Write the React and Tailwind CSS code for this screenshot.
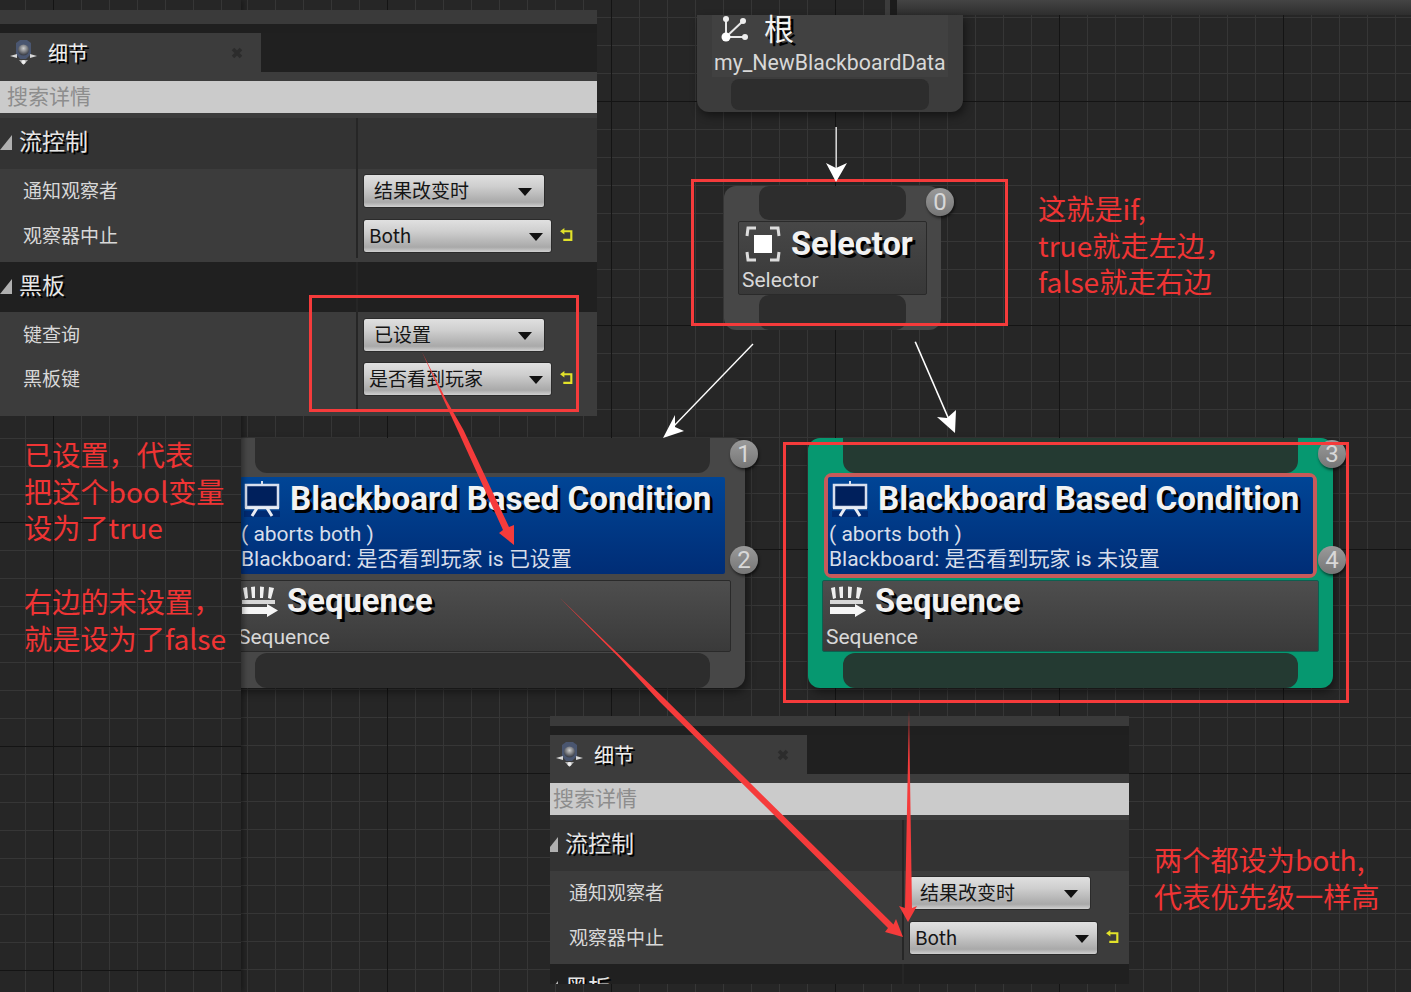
const cjk = "font-['Noto_Sans_CJK_SC','Noto_Sans',sans-serif]";
const rob = "font-['Roboto','Noto_Sans_CJK_SC',sans-serif]";

function DetailsIcon() {
  return (
    <svg width="30" height="30" viewBox="0 0 30 30" className="shrink-0">
      <defs>
        <radialGradient id="sph" cx="0.5" cy="0.35" r="0.6">
          <stop offset="0" stopColor="#cfcfcf" />
          <stop offset="1" stopColor="#3d4048" />
        </radialGradient>
      </defs>
      <path d="M8 5 L12 2 H19 L23 5 V16 L18 21 H12 L8 16 Z" fill="#4a5670" />
      <circle cx="15.5" cy="12" r="5.5" fill="url(#sph)" />
      <path d="M2 18 L9 16 L9 20 Z M29 18 L22 16 L22 20 Z" fill="#d8d8d8" />
      <path d="M11 22 H20 L15.500 27 Z" fill="#b0b0b0" />
      <circle cx="15.500" cy="24" r="2" fill="#f0f0f0" />
    </svg>
  );
}

function Dropdown({ label, wide }) {
  return (
    <div className="flex items-center">
      <div
        className={`flex h-[34px] items-center justify-between rounded-[3px] border border-[#2b2b2b] bg-[linear-gradient(to_bottom,#e0e0e0_0%,#cfcfcf_35%,#a9a9a9_85%,#d0d0d0_100%)] pb-[3px] ${cjk} text-[19px] leading-none text-[#151515] ${wide ? "w-[189px] pl-[5px] pr-[8px]" : "w-[182px] pl-[10px] pr-[12px]"}`}
      >
        <span>{label}</span>
        <svg width="14" height="8" viewBox="0 0 14 8" className="mt-[4px]"><path d="M0 0 H14 L7 8 Z" fill="#111" /></svg>
      </div>
      {wide && (
        <svg width="15" height="15" viewBox="0 0 14 14" className="mb-[3px] ml-[7px]">
          <path d="M5 1 L1 4 L5 7 Z" fill="#e2e22a" />
          <path d="M4 4 H11.500 V12 H4" fill="none" stroke="#e2e22a" strokeWidth="2" />
        </svg>
      )}
    </div>
  );
}

function Section({ title, dark, headH, pt, gap, pb, rows }) {
  return (
    <div>
      <div className={`flex ${headH} ${dark ? "bg-[#202020]" : "bg-[#333333]"}`}>
        <div className="flex w-[356px] items-center pb-[6px]">
          <svg width="13" height="15" viewBox="0 0 13 15" className="mt-[4px] shrink-0"><path d="M12 0 V15 H0 Z" fill="#b0b0b0" /></svg>
          <span className={`ml-[6px] ${cjk} text-[23px] text-[#e6e6e6] [text-shadow:2px_2px_0_#000]`}>{title}</span>
        </div>
        <div className="w-[2px] bg-[#262626]" />
      </div>
      {rows && (
        <div className="flex bg-[#3c3c3c]">
          <div className={`flex w-[356px] flex-col pl-[23px] ${pt} ${gap}`}>
            {rows.map((r) => (
              <div key={r.k} className={`flex h-[34px] items-center pb-[1px] ${cjk} text-[19px] text-[#d8d8d8]`}>{r.k}</div>
            ))}
          </div>
          <div className={`mb-[4px] flex flex-col border-l-2 border-[#262626] pl-[5px] ${pt} ${gap} ${pb}`}>
            {rows.map((r) => (
              <Dropdown key={r.k} label={r.v} wide={r.wide} />
            ))}
          </div>
        </div>
      )}
    </div>
  );
}

function DetailsPanel({ className, bandH, innerW, shift, second }) {
  return (
    <div className={`absolute overflow-hidden ${className}`}>
      <div className={`flex flex-col ${shift} ${innerW}`}>
        <div className={`${bandH} bg-[#3a3a3a]`} />
        <div className="h-[9px] bg-[#1f1f1f]" />
        <div className="flex h-[39px] bg-[#202020]">
          <div className="flex w-[261px] items-center bg-[#3c3c3c] pl-[8px]">
            <DetailsIcon />
            <span className={`ml-[10px] ${cjk} text-[20px] text-[#f0f0f0] [text-shadow:2px_2px_0_#000]`}>细节</span>
            <svg width="12" height="12" viewBox="0 0 12 12" className="ml-[143px]">
              <path d="M2 2 L10 10 M10 2 L2 10" stroke="#2c2c2c" strokeWidth="3.500" />
            </svg>
          </div>
        </div>
        <div className="h-[9px] bg-[#3c3c3c]" />
        <div className={`flex h-[32px] items-center bg-[#cbcbcb] pb-[2px] pl-[7px] ${cjk} text-[21px] text-[#8d8d8d]`}>搜索详情</div>
        <div className="h-[5px] bg-[#3c3c3c]" />
        <Section
          title="流控制"
          headH="h-[51px]"
          pt="pt-[5px]"
          gap="gap-[11px]"
          pb="pb-[5px]"
          rows={[
            { k: "通知观察者", v: "结果改变时" },
            { k: "观察器中止", v: "Both", wide: true },
          ]}
        />
        <Section
          title="黑板"
          dark
          headH="h-[50px]"
          pt="pt-[6px]"
          gap="gap-[10px]"
          pb="pb-[16px]"
          rows={
            second
              ? [
                  { k: "键查询", v: "已设置" },
                  { k: "黑板键", v: "是否看到玩家", wide: true },
                ]
              : null
          }
        />
      </div>
    </div>
  );
}

function Badge({ n, className }) {
  return (
    <div
      className={`absolute flex h-[28px] w-[28px] items-center justify-center rounded-full bg-[linear-gradient(to_bottom,#9a9a9a,#767676)] shadow-[1px_2px_3px_rgba(0,0,0,0.6)] ${rob} text-[24px] leading-none text-[#d8d8d8] ${className}`}
    >
      {n}
    </div>
  );
}

function BoardIcon() {
  return (
    <svg width="36" height="36" viewBox="0 0 36 36" className="shrink-0">
      <rect x="0" y="30" width="36" height="6" fill="#00246a" opacity="0.7" />
      <path d="M17 0 H19 V4 H17 Z" fill="#d8dfee" />
      <rect x="2" y="4" width="32" height="22" fill="#00205c" stroke="#d8dfee" strokeWidth="2.500" />
      <path d="M13 27 L8 35 M23 27 L28 35" stroke="#e8ecf4" strokeWidth="3" />
      <path d="M1 27 H35" stroke="#e8ecf4" strokeWidth="2.500" />
    </svg>
  );
}

function SeqIcon() {
  return (
    <svg width="36" height="32" viewBox="0 0 36 32" className="shrink-0">
      <path d="M1 2 L5 1 L6 12 L3 13 Z M9 1 L13 0.500 L13 12 L10 12 Z M18 0.500 L22 1 L21 12 L18 12 Z M27 1 L32 2 L29 13 L26 12 Z" fill="#efefef" />
      <path d="M0 14 H33 V18 H0 Z" fill="#d8d8d8" />
      <path d="M0 21 H25 V18 L36 24.500 L25 31 V28 H0 Z" fill="#f6f6f6" />
    </svg>
  );
}

function SelectorIcon() {
  return (
    <svg width="36" height="36" viewBox="0 0 36 36" className="shrink-0">
      <rect x="9" y="9" width="18" height="18" fill="#ffffff" />
      <path d="M2 10 L3 2 H11 M25 2 H33 L34 10 M2 26 L3 34 H11 M25 34 H33 L34 26" fill="none" stroke="#dcdcdc" strokeWidth="3" />
    </svg>
  );
}

function RootIcon() {
  return (
    <svg width="28" height="28" viewBox="0 0 28 28" className="shrink-0">
      <path d="M5 3 V21 H24 M5 21 L22 5" fill="none" stroke="#e8e8e8" strokeWidth="2" />
      <circle cx="5" cy="21" r="4.500" fill="#fff" />
      <circle cx="24" cy="21" r="3" fill="#eee" />
      <circle cx="22" cy="5" r="3" fill="#eee" />
      <circle cx="5" cy="3" r="3" fill="#eee" />
    </svg>
  );
}

const titleBase = `${rob} font-bold leading-none text-[#f2f2f2] [text-shadow:3px_3px_0_#000] whitespace-nowrap`;
const subCls = `${rob} font-normal text-[21px] leading-[25px] whitespace-nowrap`;

function ConditionNode({ className, selected, state }) {
  return (
    <div className={`absolute flex h-[250px] w-[525px] flex-col rounded-[12px] shadow-[2px_4px_8px_rgba(0,0,0,0.45)] ${selected ? "bg-[#069870]" : "bg-[#474747]"} ${className}`}>
      <div className={`ml-[35px] h-[35px] w-[455px] rounded-b-[12px] ${selected ? "bg-[#243a32]" : "bg-[#2d2d2d]"}`} />
      <div className={`ml-[16px] h-[105px] w-[493px] rounded-[8px] border-[4px] ${selected ? "border-[#c85a5a]" : "border-transparent"}`}>
        <div className="h-full rounded-[2px] bg-[linear-gradient(to_bottom,#004596,#002d76)] px-[1px]">
          <div className="flex h-[45px] items-center pb-[2px] pl-[3px]">
            <BoardIcon />
            <span className={`ml-[10px] text-[33.200px] ${titleBase}`}>Blackboard Based Condition</span>
          </div>
          <div className={`${subCls} text-[#d8deea]`}>( aborts both )</div>
          <div className={`${subCls} text-[#d8deea]`}>Blackboard: 是否看到玩家 is {state}</div>
        </div>
      </div>
      <div className={`ml-[14px] mt-[2px] h-[72px] w-[497px] rounded-[2px] border ${selected ? "border-[#0c6050]" : "border-[#2a2a2a]"} bg-[linear-gradient(to_bottom,#4e4e4e,#3a3a3a)]`}>
        <div className="flex h-[44px] items-center pb-[3px] pl-[7px]">
          <SeqIcon />
          <span className={`ml-[9px] text-[32.800px] ${titleBase}`}>Sequence</span>
        </div>
        <div className={`pl-[3px] ${subCls} text-[#d8d8d8]`}>Sequence</div>
      </div>
      <div className={`ml-[35px] mt-[1px] h-[35px] w-[455px] rounded-[12px] ${selected ? "bg-[#243a32]" : "bg-[#2d2d2d]"}`} />
    </div>
  );
}

function SelectorNode() {
  return (
    <div className="absolute left-[724px] top-[186px] flex h-[144px] w-[217px] flex-col items-center rounded-[12px] bg-[#474747]">
      <div className="h-[34px] w-[147px] rounded-[10px] bg-[#2d2d2d]" />
      <div className="mt-[1px] flex h-[74px] w-[189px] flex-col rounded-[2px] border border-[#2a2a2a] bg-[linear-gradient(to_bottom,#474747,#383838)]">
        <div className="flex h-[46px] items-center pb-[2px] pl-[6px]">
          <SelectorIcon />
          <span className={`ml-[10px] text-[32.600px] ${titleBase}`}>Selector</span>
        </div>
        <div className={`pl-[3px] ${subCls} text-[#d8d8d8]`}>Selector</div>
      </div>
      <div className="h-[35px] w-[147px] rounded-[10px] bg-[#2d2d2d]" />
    </div>
  );
}

function RootNode() {
  return (
    <div className="absolute left-[697px] top-[15px] flex h-[97px] w-[266px] flex-col items-center rounded-b-[12px] bg-[#3c3c3c] shadow-[2px_4px_8px_rgba(0,0,0,0.45)]">
      <div className="h-[62px] w-[236px] bg-[#414141]">
        <div className="flex h-[30px] items-center pl-[9px]">
          <RootIcon />
          <span className={`ml-[15px] ${cjk} pb-[6px] text-[30px] leading-none text-[#f2f2f2] [text-shadow:3px_3px_0_#000]`}>根</span>
        </div>
        <div className={`mt-[5px] pl-[2px] ${rob} text-[21.300px] leading-[25px] whitespace-nowrap text-[#d8d8d8]`}>my_NewBlackboardData</div>
      </div>
      <div className="mt-[2px] h-[31px] w-[198px] rounded-[8px] bg-[#2d2d2d]" />
    </div>
  );
}

function Note({ className, lines }) {
  return (
    <div className={`absolute ${cjk} text-[28.200px] leading-[36.500px] whitespace-nowrap text-[#ef3434] ${className}`}>
      {lines.map((l) => (
        <div key={l}>{l}</div>
      ))}
    </div>
  );
}

export default function App() {
  const grid =
    "[background-image:linear-gradient(to_right,#141414_1px,transparent_1px),linear-gradient(to_bottom,#141414_1px,transparent_1px),linear-gradient(to_right,#363636_1px,transparent_1px),linear-gradient(to_bottom,#363636_1px,transparent_1px)] [background-size:224px_224px,224px_224px,28px_28px,28px_28px]";
  return (
    <div className={`relative h-[992px] w-[1411px] overflow-hidden bg-[#262626] ${grid} [background-position:163px_101px,163px_101px,23px_17px,23px_17px]`}>
      {/* top window strip */}
      <div className="flex h-[15px] w-full bg-transparent">
        <div className="ml-[885px] w-[5px] bg-[#3c3c3c]" />
        <div className="w-[7px] bg-[#1c1c1c]" />
        <div className="flex-1 bg-[linear-gradient(to_bottom,#444444,#2e2e2e)]" />
      </div>

      <RootNode />
      <SelectorNode />
      <Badge n="0" className="left-[926px] top-[188px]" />

      <ConditionNode className="left-[220px] top-[438px]" state="已设置" />
      <Badge n="1" className="left-[730px] top-[440px]" />
      <Badge n="2" className="left-[730px] top-[546px]" />

      <ConditionNode className="left-[808px] top-[438px]" selected state="未设置" />
      <Badge n="3" className="left-[1318px] top-[440px]" />
      <Badge n="4" className="left-[1318px] top-[546px]" />

      {/* left canvas window */}
      <div className={`absolute left-0 top-0 h-[992px] w-[241px] bg-[#262626] shadow-[2px_0_6px_rgba(0,0,0,0.4)] ${grid} [background-position:53px_74px,53px_74px,25px_18px,25px_18px]`} />

      <DetailsPanel className="left-0 top-[10px] h-[406px] w-[597px]" bandH="h-[14px]" innerW="w-[597px]" shift="ml-0" second />
      <DetailsPanel className="left-[550px] top-[716px] h-[268px] w-[579px]" bandH="h-[10px]" innerW="w-[583px]" shift="ml-[-4px]" />

      <Note className="left-[1038px] top-[190px]" lines={["这就是if,", "true就走左边\uFF0C", "false就走右边"]} />
      <Note className="left-[24px] top-[436px]" lines={["已设置\uFF0C代表", "把这个bool变量", "设为了true"]} />
      <Note className="left-[24px] top-[583px]" lines={["右边的未设置\uFF0C", "就是设为了false"]} />
      <Note className="left-[1154px] top-[841px]" lines={["两个都设为both,", "代表优先级一样高"]} />

      {/* annotation layer: rectangles and arrows drawn on the picture */}
      <svg width="1411" height="992" viewBox="0 0 1411 992" className="pointer-events-none absolute left-0 top-0">
        <g fill="none" stroke="#f53b3b" strokeWidth="3">
          <rect x="310.500" y="296.500" width="267" height="114" />
          <rect x="692.500" y="180.500" width="314" height="144" />
          <rect x="784.500" y="443.500" width="563" height="258" />
        </g>
        <g fill="#ffffff">
          <path d="M835.500 127 H836.800 V170 H835.500 Z" />
          <path d="M826 163 L836 168 L847 163 L836 182 Z" />
          <path d="M752.500 343.500 L753.500 344.500 L672 429 L671 428 Z" />
          <path d="M663 438 L675 415 L675 427 L684 431 Z" />
          <path d="M914.500 342 L916 341.500 L950 420 L948.500 420.500 Z" />
          <path d="M955 433 L937 417 L947 418 L956 410 Z" />
        </g>
        <g fill="#f53b3b">
          <path d="M422 352 L446 399.500 L463.500 430 L509 527 L514 525 L514 545 L499 533 L503 530 L458.500 432 L444 400.500 Z" />
          <path d="M560 598 L620.700 656.300 L664 698 L893.500 924.500 L896 919 L903 937 L885 932 L888 928 L660 702 L619.300 657.700 Z" />
          <path d="M909 710 L912 908 L917 906 L908 922 L899 906 L905 908 Z" />
        </g>
      </svg>
    </div>
  );
}
